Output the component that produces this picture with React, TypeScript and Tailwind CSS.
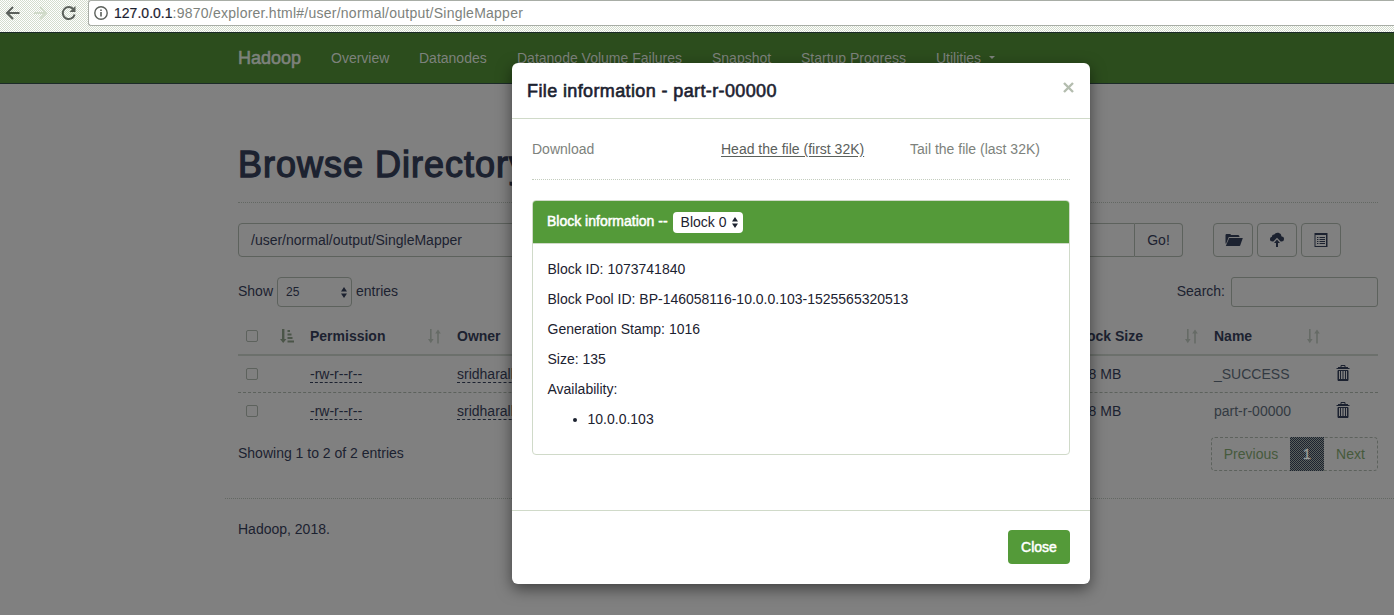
import React from "react";

const FolderIcon = () => (
  <svg width="18" height="14" viewBox="0 0 18 14" fill="currentColor" className="ml-[2px]">
    <path d="M0.5 10V1.8L1.3 1H5.2L6.2 2H13.4L14.4 3V4H3.8L1 11Z" />
    <path d="M4.2 5H17.8L15.2 12.6Q15 13 14.6 13H0.8Z" />
  </svg>
);

const CloudUploadIcon = () => (
  <svg width="16" height="16" viewBox="0 0 16 16" fill="currentColor">
    <path d="M3 9.6H4.4L8 5.8L11.6 9.6H12.6A2.4 2.4 0 0 0 15 7.2A2.5 2.5 0 0 0 12.6 4.4A4 4 0 0 0 5.2 2.6A2.2 2.2 0 0 0 2.9 4.8A2.4 2.4 0 0 0 1 7.2A2.3 2.3 0 0 0 3 9.6Z" />
    <path d="M8 7.6L11 11H9V15H7V11H5Z" />
  </svg>
);

const ListAltIcon = () => (
  <svg width="14" height="14" viewBox="0 0 14 14" fill="none" stroke="currentColor">
    <path d="M1 0H13.5V13.5H1" strokeWidth="0" />
    <rect x="1" y="0.5" width="12" height="13" />
    <path d="M1 1.5H13M12.5 1V13M5.5 4.5H11M5.5 6.5H11M5.5 8.5H11M5.5 10.5H11M3 4.5H4.4M3 6.5H4.4M3 8.5H4.4M3 10.5H4.4" />
  </svg>
);

const TrashIcon = () => (
  <svg width="14" height="16" viewBox="0 0 14 16" fill="none" stroke="currentColor" className="-ml-[1px] -mt-[3px]">
    <path d="M5 2.5V0.5H9V2.5M2 2.5H12M0.5 3.5H13.5" />
    <path d="M2 5.5H12V15.5H2ZM4.5 6V14.5M7 6V14.5M9.5 6V14.5M2 14.5H12" />
    <path d="M2.5 5V15M11.5 5V15" />
  </svg>
);

const SortIcon = () => (
  <svg width="13" height="15" viewBox="0 0 13 15" fill="none" stroke="currentColor">
    <path strokeWidth="1.6" d="M2.8 0V12M10 14.5V3" />
    <path fill="currentColor" stroke="none" d="M0 10H5.6L2.8 14.2ZM7.2 4.6H12.8L10 0.6Z" />
  </svg>
);

const SortActiveIcon = () => (
  <svg width="15" height="15" viewBox="0 0 15 15" fill="none" stroke="currentColor">
    <path strokeWidth="2.4" d="M3.2 0V11" />
    <path fill="currentColor" stroke="none" d="M0 10H6.4L3.2 14Z" />
    <path strokeWidth="2" d="M7.5 2H10M7.5 5.5H11.5M7.5 9H12.5M7.5 12.5H14" />
  </svg>
);

const UpDown = () => (
  <svg width="6" height="11" viewBox="0 0 6 11" fill="currentColor">
    <path d="M3 0L6 4.5H0ZM3 11L0 6.5H6Z" />
  </svg>
);

const Check = () => <span className="block h-3 w-3 rounded-[2px] border border-[#5d625d]" />;

const navItems = [
  { label: "Overview", cls: "w-[88px]" },
  { label: "Datanodes", cls: "w-[98px]" },
  { label: "Datanode Volume Failures", cls: "w-[195px]" },
  { label: "Snapshot", cls: "w-[89px]" },
  { label: "Startup Progress", cls: "w-[135px]" },
];

const files = ["_SUCCESS", "part-r-00000"];

function BrowserBar() {
  return (
    <div className="flex h-[32px] items-start bg-[repeating-conic-gradient(#ffffff_0_25%,#d3dccd_0_50%)] bg-[length:2px_2px]">
      <div className="flex h-[26px] w-[88px] shrink-0 items-center">
        <svg width="88" height="26" viewBox="0 0 88 26" fill="none" strokeWidth="2">
          <path stroke="#5b605b" d="M19.5 13H7M13 7L7 13L13 19" />
          <path stroke="#d0dac9" d="M34 13H46M40 7L46 13L40 19" />
          <path stroke="#5b605b" d="M73.2 9A6 6 0 1 0 74.6 14.5" />
          <path fill="#5b605b" d="M75.5 6V12H69.5Z" />
        </svg>
      </div>
      <div className="flex h-[26px] min-w-0 flex-1 items-center rounded-l-[3px] border border-r-0 border-[#a8ada6] bg-white pl-[5px]">
        <svg width="14" height="14" viewBox="0 0 14 14" fill="none" stroke="#5b605b">
          <circle cx="7" cy="7" r="6.2" strokeWidth="1.4" />
          <path strokeWidth="1.6" d="M7 6V10.5M7 3.4V5" />
        </svg>
        <span className="ml-[6px] whitespace-nowrap text-[14px] tracking-[0.245px] text-[#7d827c]">
          <span className="tracking-[0.02px] text-[#1c2230] [-webkit-text-stroke:0.2px]">127.0.0.1</span>:9870/explorer.html#/user/normal/output/SingleMapper
        </span>
      </div>
    </div>
  );
}

function Navbar() {
  return (
    <nav className="flex h-[52px] items-center border-y border-[#1c2b28] bg-[#2c4d1d] pl-[238px] text-[14px] text-[#7d827c]">
      <span className="w-[93px] text-[18px] [-webkit-text-stroke:0.6px]">Hadoop</span>
      {navItems.map((n) => (
        <span key={n.label} className={`${n.cls} shrink-0 whitespace-nowrap`}>{n.label}</span>
      ))}
      <span>Utilities</span>
      <svg className="ml-2" width="6" height="4" viewBox="0 0 6 4" fill="currentColor"><path d="M0 0H6L3 3Z" /></svg>
    </nav>
  );
}

function Directory() {
  return (
    <main className="ml-[238px] w-[1140px]">
      <h1 className="flex h-[119px] items-end whitespace-nowrap border-b border-dotted border-[#636863] pb-[17px] text-[36px] leading-[40px] tracking-[1px] [-webkit-text-stroke:1.3px]">
        Browse Directory
      </h1>
      <div className="mt-5 flex h-[34px]">
        <div className="flex w-[897px] items-center rounded-l border border-[#5d625d] pl-3">/user/normal/output/SingleMapper</div>
        <div className="flex w-[48px] items-center justify-center rounded-r border border-l-0 border-[#5d625d]">Go!</div>
        <div className="ml-[30px] flex gap-1">
          <div className="flex w-10 items-center justify-center rounded border border-[#5d625d]"><FolderIcon /></div>
          <div className="flex w-10 items-center justify-center rounded border border-[#5d625d]"><CloudUploadIcon /></div>
          <div className="flex w-10 items-center justify-center rounded border border-[#5d625d]"><ListAltIcon /></div>
        </div>
      </div>
      <div className="mt-5 flex h-[30px] items-center">
        <span className="-mt-[2px]">Show</span>
        <div className="mx-1 flex h-[30px] w-[75px] items-center justify-between rounded border border-[#5d625d] pl-2 pr-1 text-[12px]">25<UpDown /></div>
        <span className="-mt-[2px]">entries</span>
        <span className="-mt-[2px] ml-auto">Search:</span>
        <div className="ml-[6px] h-[30px] w-[147px] rounded-[3px] border border-[#5d625d]" />
      </div>
      <div className="mt-[11px]">
        <div className="flex h-[38px] items-center border-b-2 border-[#6c706c] font-bold">
          <div className="flex w-[42px] pl-2"><Check /></div>
          <div className="w-[30px] text-[#4b5548]"><SortActiveIcon /></div>
          <div className="w-[118px]">Permission</div>
          <div className="w-[29px] text-[#666b66]"><SortIcon /></div>
          <div className="w-[616px]">Owner</div>
          <div className="w-[112px] whitespace-nowrap">Block Size</div>
          <div className="w-[29px] text-[#666b66]"><SortIcon /></div>
          <div className="w-[93px]">Name</div>
          <div className="text-[#666b66]"><SortIcon /></div>
        </div>
        {files.map((f, i) => (
          <div key={f} className={`flex items-center ${i === 0 ? "h-[37px] border-b border-dashed border-[#5d625d]" : "h-[36px]"}`}>
            <div className="flex w-[72px] pl-2"><Check /></div>
            <div className="w-[147px]"><span className="border-b border-dashed border-[#1c2230]">-rw-r--r--</span></div>
            <div className="w-[616px]"><span className="border-b border-dashed border-[#1c2230]">sridharalla</span></div>
            <div className="w-[141px] whitespace-nowrap">128 MB</div>
            <div className="w-[123px] text-[#333a42]">{f}</div>
            <TrashIcon />
          </div>
        ))}
      </div>
      <div className="mt-[8px] flex h-[34px]">
        <span className="mt-[6px]">Showing 1 to 2 of 2 entries</span>
        <div className="ml-auto flex w-[167px] items-stretch rounded border border-dashed border-[#5d625d] text-[#465a3c]">
          <span className="flex w-[78px] items-center justify-center">Previous</span>
          <span className="-my-px flex w-[34px] items-center justify-center bg-[repeating-conic-gradient(#1c2230_0_25%,#5a605c_0_50%)] bg-[length:2px_2px] text-[#9a9d9a] [-webkit-text-stroke:0.4px]">1</span>
          <span className="flex flex-1 items-center justify-center">Next</span>
        </div>
      </div>
    </main>
  );
}

function FileModal() {
  return (
    <div className="absolute left-[512px] top-[63px] flex h-[521px] w-[578px] flex-col rounded-[6px] bg-white shadow-[0_5px_15px_rgba(0,0,0,0.5)]">
      <header className="flex h-14 items-center justify-between border-b border-[#d0dac9] pl-[15px] pr-4">
        <h4 className="text-[18px] tracking-[0.38px] [-webkit-text-stroke:0.6px]">File information - part-r-00000</h4>
        <svg className="-mt-[6px]" width="11" height="11" viewBox="0 0 11 11" fill="none" stroke="#b4bdaf" strokeWidth="2.4"><path d="M1 1L10 10M10 1L1 10" /></svg>
      </header>
      <div className="flex flex-1 flex-col px-5">
        <div className="flex h-[61px] items-center border-b border-dotted border-[#c4cdbf] text-[#7d827c]">
          <span className="w-[189px]">Download</span>
          <span className="w-[189px] text-[#5b605b] underline underline-offset-2">Head the file (first 32K)</span>
          <span>Tail the file (last 32K)</span>
        </div>
        <section className="mt-5 h-[255px] rounded border border-[#d0dac9]">
          <div className="flex h-[43px] items-center rounded-t-[3px] border-b border-[#d0dac9] bg-[#549a39] pl-[14px] text-white">
            <span className="-mt-[2px] [-webkit-text-stroke:0.5px]">Block information --</span>
            <span className="ml-[5px] flex h-[21px] w-[70px] items-center justify-between rounded-[4px] bg-white pl-[8px] pr-[5px] text-[#1c2230]">Block 0<UpDown /></span>
          </div>
          <div className="flex flex-col gap-[10px] pl-[14.5px] pr-[14px] pt-[15px] leading-5">
            <p>Block ID: 1073741840</p>
            <p>Block Pool ID: BP-146058116-10.0.0.103-1525565320513</p>
            <p>Generation Stamp: 1016</p>
            <p>Size: 135</p>
            <p>Availability:</p>
            <ul className="list-disc pl-10"><li>10.0.0.103</li></ul>
          </div>
        </section>
      </div>
      <footer className="flex h-[74px] justify-end border-t border-[#d0dac9] pr-5 pt-[19px]">
        <button className="h-[34px] w-[62px] rounded bg-[#549a39] text-white [-webkit-text-stroke:0.5px]">Close</button>
      </footer>
    </div>
  );
}

export default function App() {
  return (
    <div className="relative h-[615px] w-[1394px] overflow-hidden bg-[#808080] font-['Liberation_Sans',sans-serif] text-[14px] leading-5 text-[#1c2230]">
      <BrowserBar />
      <Navbar />
      <Directory />
      <footer className="ml-[225px] mt-[27px] border-t border-dotted border-[#636863] pl-[13px] pt-5">Hadoop, 2018.</footer>
      <FileModal />
    </div>
  );
}
